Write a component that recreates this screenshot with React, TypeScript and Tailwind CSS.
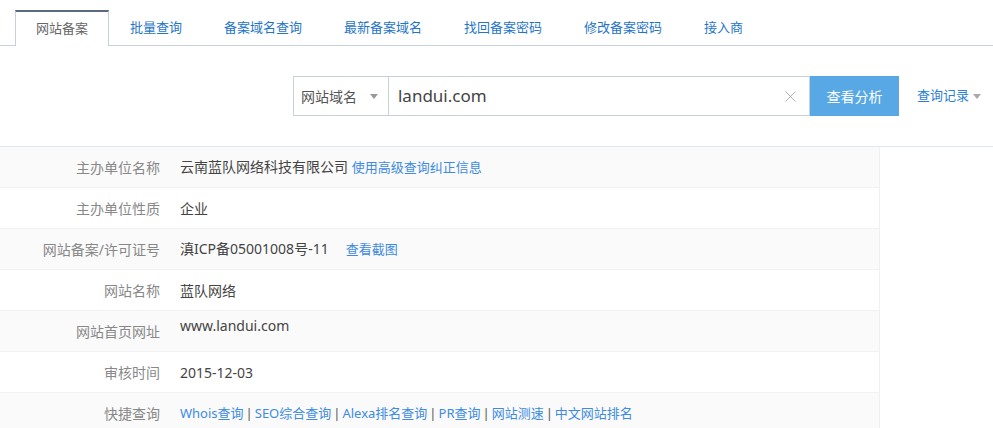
import { X } from "lucide-react";

const tabs = ["网站备案", "批量查询", "备案域名查询", "最新备案域名", "找回备案密码", "修改备案密码", "接入商"];

function Sep() {
  return <span className="text-[#555] mx-[2px]">|</span>;
}

function Link({ children }: { children: React.ReactNode }) {
  return <a className="text-[#3d8be2] text-[13px] cursor-pointer">{children}</a>;
}

const rows: { label: string; value: React.ReactNode; top?: boolean }[] = [
  {
    label: "主办单位名称",
    value: (
      <>
        <span>云南蓝队网络科技有限公司</span> <Link>使用高级查询纠正信息</Link>
      </>
    ),
  },
  { label: "主办单位性质", value: "企业" },
  {
    label: "网站备案/许可证号",
    value: (
      <>
        <span>滇ICP备05001008号-11</span>
        <span className="ml-[17px]">
          <Link>查看截图</Link>
        </span>
      </>
    ),
  },
  { label: "网站名称", value: "蓝队网络" },
  { label: "网站首页网址", value: "www.landui.com", top: true },
  { label: "审核时间", value: "2015-12-03" },
  {
    label: "快捷查询",
    value: (
      <span className="text-[13px]">
        <Link>Whois查询</Link>
        <Sep />
        <Link>SEO综合查询</Link>
        <Sep />
        <Link>Alexa排名查询</Link>
        <Sep />
        <Link>PR查询</Link>
        <Sep />
        <Link>网站测速</Link>
        <Sep />
        <Link>中文网站排名</Link>
      </span>
    ),
  },
];

export default function App() {
  return (
    <div
      className="w-[993px] h-[428px] overflow-hidden bg-white"
      style={{ fontFamily: '"Noto Sans", "Noto Sans CJK SC", sans-serif' }}
    >
      {/* Tabs */}
      <div className="pt-[10px]">
        <div className="flex border-b border-[#c8d0dc] h-[36px] pl-[15px]">
          {tabs.map((t, i) =>
            i === 0 ? (
              <div
                key={t}
                className="h-[36px] px-[20px] flex items-center text-[13px] text-[#666] bg-white border-t-2 border-t-[#5a6a84] border-x border-x-[#c8d0dc] -mb-px"
              >
                {t}
              </div>
            ) : (
              <div
                key={t}
                className="h-[35px] px-[21px] flex items-center text-[13px] text-[#1f75c8] cursor-pointer"
              >
                {t}
              </div>
            )
          )}
        </div>
      </div>

      {/* Search */}
      <div className="flex justify-end items-center pt-[30px] pb-[30px] pr-[12px] border-b border-[#e1e7ee]">
        <div className="flex h-[40px]">
          <div className="w-[96px] h-[40px] border border-[#c8d0dc] flex items-center justify-between pl-[7px] pr-[10px] text-[14px] text-[#555]">
            <span>网站域名</span>
            <span className="w-0 h-0 border-l-[4px] border-r-[4px] border-t-[5px] border-l-transparent border-r-transparent border-t-[#999]" />
          </div>
          <div className="w-[421px] h-[40px] border border-l-0 border-[#c8d0dc] flex items-center justify-between pl-[9px] pr-[9px]">
            <span className="text-[17px] text-[#444]">landui.com</span>
            <X size={19} strokeWidth={1} className="text-[#999]" />
          </div>
          <button className="w-[89px] h-[40px] bg-[#57a8e4] text-white text-[14px]">查看分析</button>
        </div>
        <div className="ml-[18px] flex items-center text-[13px] text-[#2a7fd4]">
          <span>查询记录</span>
          <span className="ml-[4px] w-0 h-0 border-l-[4px] border-r-[4px] border-t-[5px] border-l-transparent border-r-transparent border-t-[#aaa]" />
        </div>
      </div>

      {/* Table */}
      <div className="w-[880px] border-r border-[#f0f0f0]">
        {rows.map((r, i) => (
          <div
            key={r.label}
            className={`flex h-[41px] border-b border-[#f2f2f2] text-[14px] ${i % 2 === 0 ? "bg-[#fafafa]" : "bg-white"}`}
          >
            <div className="w-[160px] flex items-center justify-end text-[#888]">{r.label}</div>
            <div
              className={`pl-[20px] flex text-[#444] ${r.top ? "items-start pt-[4px]" : "items-center"}`}
            >
              <div>{r.value}</div>
            </div>
          </div>
        ))}
      </div>
    </div>
  );
}
